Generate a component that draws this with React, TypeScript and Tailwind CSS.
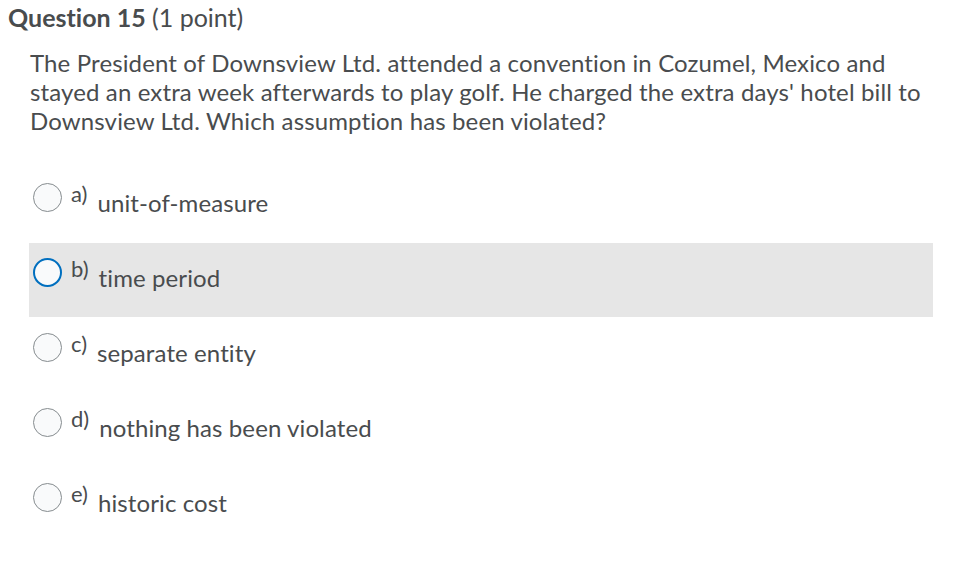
import React from "react";

const options = [
  { k: "a)", t: "unit-of-measure" },
  { k: "b)", t: "time period", sel: true },
  { k: "c)", t: "separate entity" },
  { k: "d)", t: "nothing has been violated" },
  { k: "e)", t: "historic cost" },
];

export default function App() {
  return (
    <div className="w-[971px] h-[566px] bg-white text-[#494c4e] font-['Lato','Liberation_Sans',sans-serif] [font-variant-ligatures:none] overflow-hidden">
      <div className="pl-[8px] pt-[2px] text-[25px] leading-[30px]">
        <span className="font-bold">Question 15</span> <span>(1 point)</span>
      </div>
      <div className="pl-[30px] pr-[30px] pt-[16px] text-[24px] leading-[29px] tracking-[0.13px]">
        The President of Downsview Ltd. attended a convention in Cozumel, Mexico and stayed an extra week afterwards to play golf. He charged the extra days' hotel bill to Downsview Ltd. Which assumption has been violated?
      </div>
      <div className="mt-[33px] ml-[29px] w-[904px] flex flex-col gap-[1px]">
        {options.map((o) => (
          <div
            key={o.k}
            className={`h-[74px] flex items-start pl-[4px] ${o.sel ? "bg-[#e6e6e6]" : ""}`}
          >
            <span
              className={`mt-[15px] w-[29px] h-[29px] rounded-full shrink-0 bg-[#f9fafb] ${
                o.sel ? "border-2 border-[#006fbf]" : "border border-[#868c8f]"
              }`}
            />
            <span className="ml-[9px] mt-[13px] text-[22px] leading-[26px]">{o.k}</span>
            <span className="ml-[10px] mt-[21px] text-[24px] leading-[28px] tracking-[0.1px]">{o.t}</span>
          </div>
        ))}
      </div>
    </div>
  );
}
